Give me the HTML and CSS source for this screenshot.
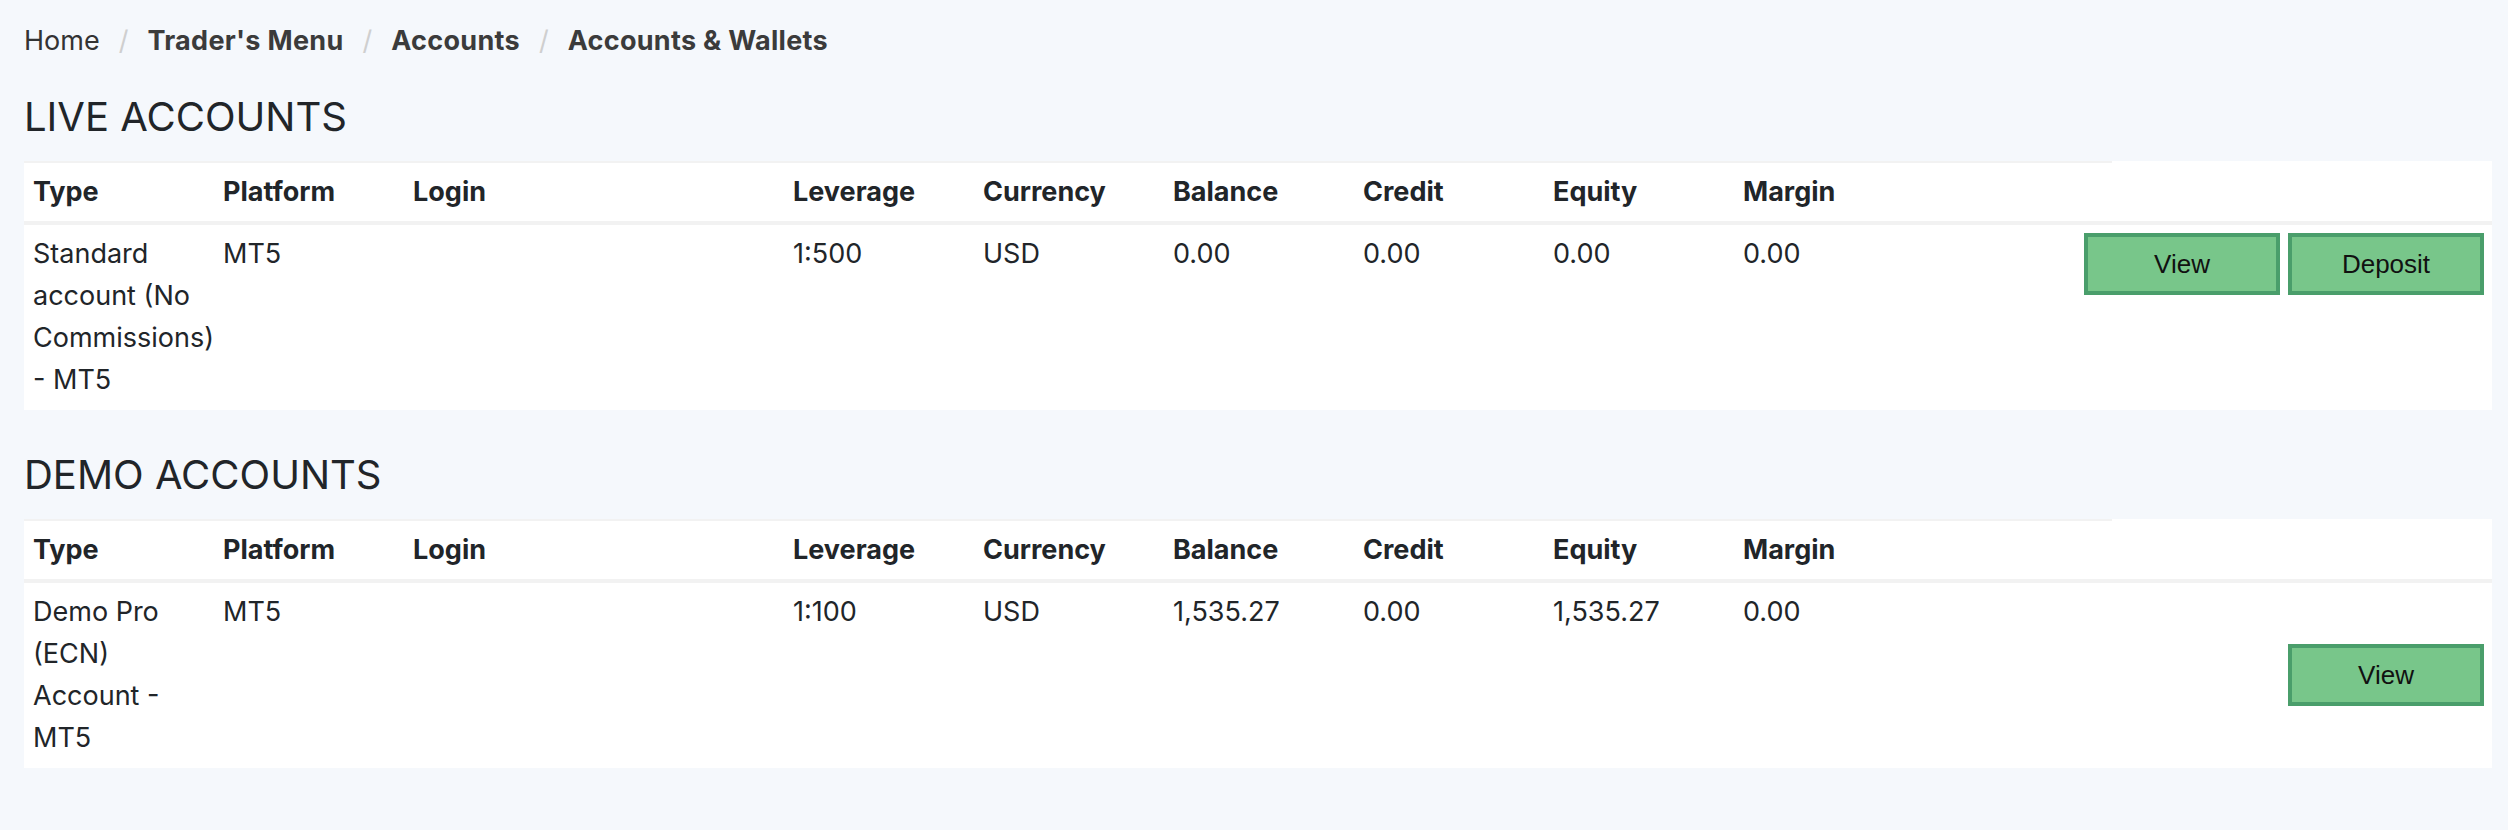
FILE: index.html
```html
<!DOCTYPE html>
<html lang="en">
<head>
<meta charset="utf-8">
<title>Accounts &amp; Wallets</title>
<link rel="stylesheet" href="styles.css">
</head>
<body>
<div class="page">
  <nav class="breadcrumb">
    <span class="crumb crumb-home">Home</span>
    <span class="sep">/</span>
    <span class="crumb">Trader's Menu</span>
    <span class="sep">/</span>
    <span class="crumb">Accounts</span>
    <span class="sep">/</span>
    <span class="crumb">Accounts &amp; Wallets</span>
  </nav>

  <h2 class="section-title">LIVE ACCOUNTS</h2>
  <div class="acc-table">
    <div class="row head">
      <div class="cell">Type</div>
      <div class="cell">Platform</div>
      <div class="cell">Login</div>
      <div class="cell">Leverage</div>
      <div class="cell">Currency</div>
      <div class="cell">Balance</div>
      <div class="cell">Credit</div>
      <div class="cell">Equity</div>
      <div class="cell">Margin</div>
      <div class="cell"></div>
    </div>
    <div class="row body">
      <div class="cell">Standard account (No Commissions) - MT5</div>
      <div class="cell">MT5</div>
      <div class="cell"></div>
      <div class="cell">1:500</div>
      <div class="cell">USD</div>
      <div class="cell">0.00</div>
      <div class="cell">0.00</div>
      <div class="cell">0.00</div>
      <div class="cell">0.00</div>
      <div class="cell actions actions-top">
        <button class="btn">View</button>
        <button class="btn">Deposit</button>
      </div>
    </div>
  </div>

  <h2 class="section-title demo">DEMO ACCOUNTS</h2>
  <div class="acc-table">
    <div class="row head">
      <div class="cell">Type</div>
      <div class="cell">Platform</div>
      <div class="cell">Login</div>
      <div class="cell">Leverage</div>
      <div class="cell">Currency</div>
      <div class="cell">Balance</div>
      <div class="cell">Credit</div>
      <div class="cell">Equity</div>
      <div class="cell">Margin</div>
      <div class="cell"></div>
    </div>
    <div class="row body">
      <div class="cell">Demo Pro (ECN) Account - MT5</div>
      <div class="cell">MT5</div>
      <div class="cell"></div>
      <div class="cell">1:100</div>
      <div class="cell">USD</div>
      <div class="cell">1,535.27</div>
      <div class="cell">0.00</div>
      <div class="cell">1,535.27</div>
      <div class="cell">0.00</div>
      <div class="cell actions actions-middle">
        <button class="btn">View</button>
      </div>
    </div>
  </div>
</div>
</body>
</html>
```

FILE: styles.css
```css
* { box-sizing: border-box; }

html, body {
  margin: 0;
  padding: 0;
  background: #f5f8fc;
}

body {
  font-family: Inter, "Noto Sans", sans-serif;
  color: #212529;
  font-size: 27px;
  line-height: 42px;
}

.page {
  padding: 20px 16px 40px 24px;
}

.breadcrumb {
  display: flex;
  align-items: center;
  font-size: 27px;
  line-height: 42px;
  color: #3a3a3a;
}

.crumb {
  font-weight: 700;
  color: #3b3b3b;
  letter-spacing: 0.3px;
}

.crumb-home {
  font-weight: 400;
  color: #333;
  letter-spacing: 0;
}

.sep {
  color: #cfcfcf;
  padding: 0 19px 0 19px;
  font-weight: 400;
}

.section-title {
  margin: 0;
  font-weight: 400;
  font-size: 40px;
  line-height: 50px;
  color: #212529;
  padding: 30px 0 19px 0;
}

.section-title.demo {
  padding-top: 40px;
}

.acc-table {
  background: #fff;
}

.row {
  display: grid;
  grid-template-columns: 190px 190px 380px 190px 190px 190px 190px 190px 190px 188px 1fr;
}

.row.head {
  border-bottom: 4px solid #f2f2f2;
  font-weight: 700;
}

.row.head .cell {
  border-top: 2px solid #f2f2f2;
}

.cell {
  padding: 8px 9px 8px 9px;
}

.row.body .cell {
  padding-bottom: 9px;
}

.actions {
  grid-column: 10 / 12;
  display: flex;
  justify-content: flex-end;
  gap: 8px;
  padding-right: 8px !important;
}

.actions-top { align-items: flex-start; }
.actions-middle { align-items: center; }

.btn {
  width: 196px;
  height: 62px;
  background: #78c68a;
  border: 4px solid #4a9e6b;
  border-radius: 0;
  font-family: "Liberation Sans", Arial, sans-serif;
  font-size: 26px;
  color: #111;
  padding: 0;
  margin: 0;
}
```
